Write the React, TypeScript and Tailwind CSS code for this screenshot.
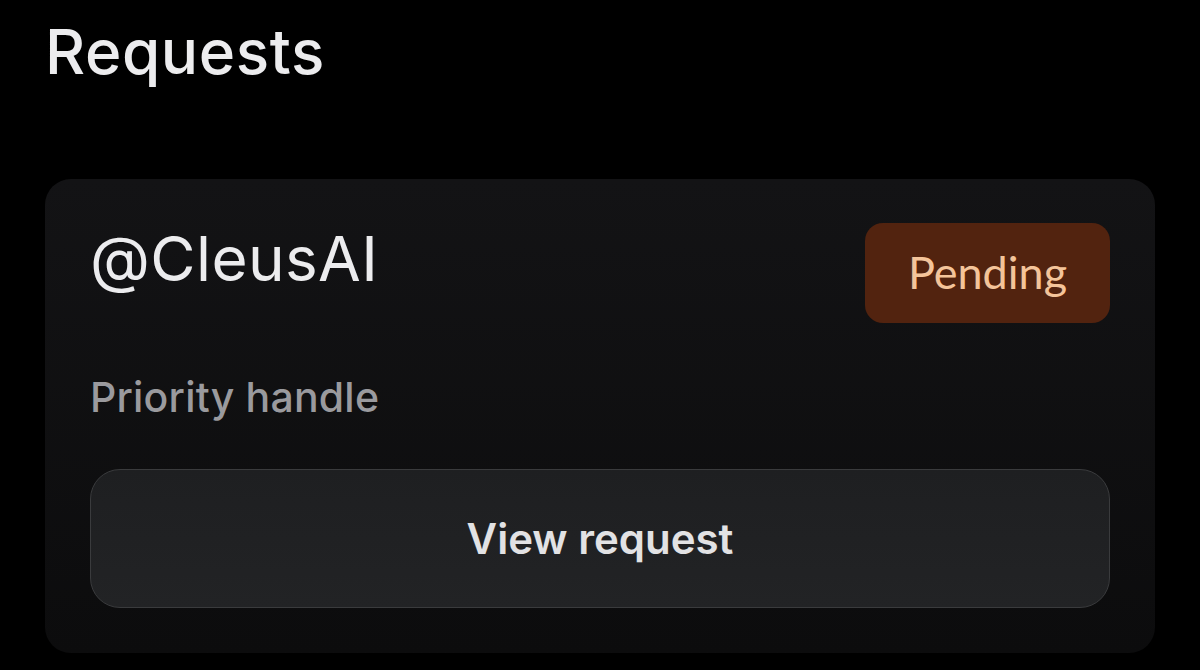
export default function App() {
  return (
    <div className="w-[1200px] h-[670px] bg-black overflow-hidden font-['Inter',sans-serif]">
      <h1 className="pl-[45px] pt-[12px] text-[62px] leading-[80px] font-medium text-[#ececee] tracking-[0.6px]">
        Requests
      </h1>

      <div className="mx-[45px] mt-[87px] h-[474px] rounded-[26px] bg-gradient-to-b from-[#131315] to-[#0c0c0d] px-[45px] pt-[44px]">
        <div className="flex items-start justify-between">
          <div className="text-[62px] leading-[80px] text-[#ececee] tracking-[0.4px] -mt-[4px]">@CleusAI</div>
          <div className="w-[245px] h-[100px] rounded-[18px] bg-[#52230f] flex items-center justify-center text-[45px] text-[#f4c49a] font-['Lato',sans-serif]">
            Pending
          </div>
        </div>

        <div className="mt-[44px] text-[41px] leading-[60px] text-[#9a9a9e] font-medium tracking-[0.2px]">Priority handle</div>

        <button className="mt-[42px] w-full h-[139px] rounded-[30px] border border-[#3a3b3d] bg-gradient-to-b from-[#1e1f21] to-[#222325] text-[42px] font-semibold text-[#e2e2e4] flex items-center justify-center">
          View request
        </button>
      </div>
    </div>
  )
}
